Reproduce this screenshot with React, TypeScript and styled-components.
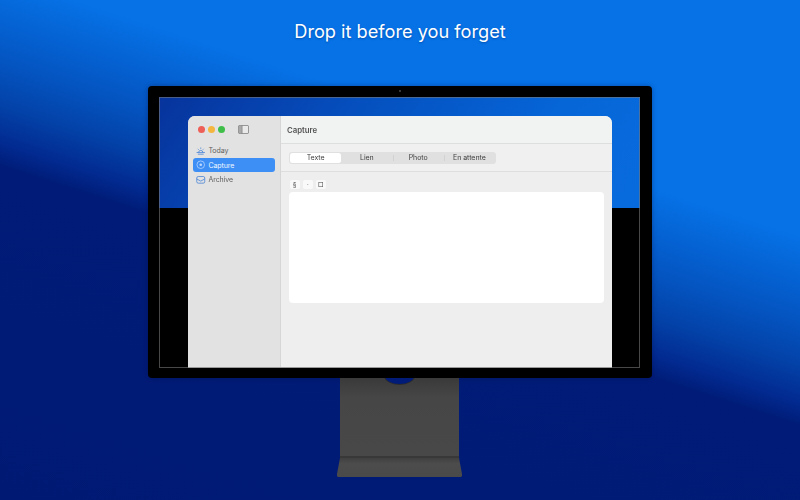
import React from 'react'
import styled, { createGlobalStyle } from 'styled-components'

const GlobalStyle = createGlobalStyle`
  html, body {
    margin: 0;
    padding: 0;
    width: 800px;
    height: 500px;
    overflow: hidden;
    background: #001a74;
  }
`

const App = () => {
  return (
    <Page>
      <GlobalStyle />
      <Title>Drop it before you forget</Title>
      <Monitor>
        <Camera />
        <Screen>
          <AppWindow>
            <Sidebar>
              <TrafficRow>
                <Light color="#ee5f58" />
                <Light color="#f4b63f" />
                <Light color="#3fbf4a" />
                <SidebarToggle viewBox="0 0 11 9">
                  <rect x="0.4" y="0.4" width="10.2" height="8.2" rx="1.4" fill="#e9e9e9" stroke="#777777" strokeWidth="0.8" />
                  <path d="M1 1H3.8V8H1Z" fill="#a9a9a9" />
                  <path d="M4 0.5V8.5" stroke="#777777" strokeWidth="0.8" />
                </SidebarToggle>
              </TrafficRow>
              <NavItem>
                <NavIcon viewBox="0 0 10 10" fill="none" stroke="#3f7fd6" strokeWidth="0.8">
                  <path d="M2.8 6.8a2.2 2.2 0 0 1 4.4 0" />
                  <path d="M5 1.6V3M1.9 3l.9.9M8.1 3l-.9.9M.6 6.8h8.8M2 8.6h6" />
                </NavIcon>
                Today
              </NavItem>
              <NavItem $active>
                <NavIcon viewBox="0 0 10 10" fill="none" stroke="#bcd8ff" strokeWidth="0.8">
                  <circle cx="5" cy="5" r="4" />
                  <circle cx="5" cy="5" r="1.4" fill="#bcd8ff" stroke="none" />
                </NavIcon>
                Capture
              </NavItem>
              <NavItem>
                <NavIcon viewBox="0 0 10 10" fill="none" stroke="#3f7fd6" strokeWidth="0.8">
                  <rect x="0.8" y="1.6" width="8.4" height="7" rx="1.6" />
                  <path d="M0.8 4.2L5 6.4L9.2 4.2" />
                </NavIcon>
                Archive
              </NavItem>
            </Sidebar>
            <Main>
              <Header>Capture</Header>
              <TabBar>
                <Tabs>
                  <Tab $active>Texte</Tab>
                  <Tab>Lien</Tab>
                  <Tab $divider>Photo</Tab>
                  <Tab $divider>En attente</Tab>
                </Tabs>
              </TabBar>
              <Editor>
                <Tools>
                  <ToolButton>§</ToolButton>
                  <ToolButton>·</ToolButton>
                  <ToolButton>□</ToolButton>
                </Tools>
                <TextArea />
              </Editor>
            </Main>
          </AppWindow>
        </Screen>
      </Monitor>
      <Stand>
        <Notch />
      </Stand>
      <StandBase />
    </Page>
  )
}

const Page = styled.div`
  width: 800px;
  height: 500px;
  overflow: hidden;
  display: flex;
  flex-direction: column;
  align-items: center;
  font-family: 'Inter', 'Liberation Sans', sans-serif;
  background: linear-gradient(198deg, #0672e6 0%, #0672e6 31%, #0455c2 42%, #0342a8 48%, #022a90 53%, #001c78 56%, #001a74 100%);
`
const Title = styled.h1`
  margin: 0;
  height: 86px;
  box-sizing: border-box;
  padding-top: 18px;
  font-size: 18.2px;
  line-height: 26px;
  font-weight: 400;
  color: #ffffff;
  text-shadow: 0 1px 2px rgba(0, 20, 80, 0.35);
`
const Monitor = styled.div`
  position: relative;
  flex: none;
  width: 504px;
  height: 292px;
  box-sizing: border-box;
  padding: 11px 11px 10px 11px;
  background: #000000;
  border-radius: 4px;
  box-shadow: 0 0 5px rgba(0, 10, 60, 0.35);
`
const Camera = styled.span`
  position: absolute;
  top: 4px;
  left: 251px;
  width: 2px;
  height: 2px;
  border-radius: 50%;
  background: #4a4a4a;
`
const Screen = styled.div`
  height: 100%;
  box-sizing: border-box;
  margin-right: 1px;
  padding: 19px 28px 0 29px;
  background:
    linear-gradient(#000, #000) bottom / 100% calc(100% - 111px) no-repeat,
    linear-gradient(125deg, #07339c 0%, #054fbe 30%, #0666d8 62%, #0a70e2 100%);
  box-shadow: inset 0 0 0 1px rgba(120, 120, 120, 0.6);
`
const AppWindow = styled.div`
  height: 100%;
  box-sizing: border-box;
  display: flex;
  background: #eeeeee;
  border-radius: 7px 7px 0 0;
  border-bottom: 1px solid #9a9a9a;
  overflow: hidden;
  filter: blur(0.25px);
`
const Sidebar = styled.aside`
  flex: none;
  width: 93px;
  box-sizing: border-box;
  padding: 0 5px;
  background: #e2e2e2;
  border-right: 1px solid #d6d6d6;
`
const TrafficRow = styled.div`
  height: 27px;
  display: flex;
  align-items: center;
  gap: 3px;
  padding-left: 4.5px;
`
const Light = styled.span<{ color: string }>`
  width: 7px;
  height: 7px;
  border-radius: 50%;
  background: ${(p) => p.color};
`
const SidebarToggle = styled.svg`
  width: 11px;
  height: 9px;
  margin-left: 10px;
`
const NavIcon = styled.svg`
  flex: none;
  width: 9.5px;
  height: 9.5px;
`
const NavItem = styled.div<{ $active?: boolean }>`
  height: 14.5px;
  box-sizing: border-box;
  padding: 0.5px 0 0 3.25px;
  display: flex;
  align-items: center;
  gap: 2.75px;
  border-radius: 3px;
  font-size: 7px;
  letter-spacing: -0.1px;
  color: ${(p) => (p.$active ? '#f2f7ff' : '#5f5f5f')};
  background: ${(p) => (p.$active ? '#3d8ff5' : 'transparent')};
`
const Main = styled.main`
  flex: 1;
  display: flex;
  flex-direction: column;
  min-width: 0;
`
const Header = styled.div`
  height: 27px;
  display: flex;
  align-items: center;
  padding-left: 6px;
  font-size: 7.8px;
  font-weight: 600;
  color: #555555;
  background: #f1f2f2;
  border-bottom: 1px solid #dedede;
`
const TabBar = styled.div`
  height: 27px;
  display: flex;
  align-items: center;
  padding-left: 8px;
  background: #f0f0f0;
  border-bottom: 1px solid #dedede;
`
const Tabs = styled.div`
  width: 207px;
  height: 12px;
  box-sizing: border-box;
  padding: 1px;
  display: grid;
  grid-template-columns: repeat(4, 1fr);
  background: #e0e0e0;
  border-radius: 3px;
`
const Tab = styled.div<{ $active?: boolean; $divider?: boolean }>`
  position: relative;
  display: flex;
  align-items: center;
  justify-content: center;
  font-size: 7px;
  letter-spacing: -0.05px;
  color: #404040;
  border-radius: 2.5px;
  background: ${(p) => (p.$active ? '#ffffff' : 'transparent')};
  &::before {
    content: '';
    display: ${(p) => (p.$divider ? 'block' : 'none')};
    position: absolute;
    left: 0;
    top: 2px;
    bottom: 2px;
    width: 1px;
    background: #d2d2d2;
  }
`
const Editor = styled.div`
  flex: 1;
  display: flex;
  flex-direction: column;
  padding: 8px 8px 0 8px;
`
const Tools = styled.div`
  display: flex;
  gap: 3.5px;
  height: 9px;
  margin-bottom: 2.5px;
  padding-left: 1px;
`
const ToolButton = styled.div`
  width: 9.5px;
  height: 9px;
  display: flex;
  align-items: center;
  justify-content: center;
  font-size: 6px;
  color: #444444;
  background: #f9f9f9;
  border-radius: 2px;
`
const TextArea = styled.div`
  height: 111.5px;
  background: #ffffff;
  border-radius: 4px;
`
const Stand = styled.div`
  flex: none;
  position: relative;
  width: 119px;
  height: 80px;
  margin-right: 1px;
  box-sizing: border-box;
  overflow: hidden;
  background: linear-gradient(#3a3a3a, #464646 25%, #484848);
  border-bottom: 2px solid #383838;
`
const Notch = styled.span`
  position: absolute;
  left: 45px;
  top: -10px;
  width: 29px;
  height: 16px;
  border-radius: 50%;
  background: #001c78;
  box-shadow: 0 0 0 1px #2c2c2c;
`
const StandBase = styled.div`
  flex: none;
  width: 125px;
  height: 19px;
  margin-right: 1px;
  background: linear-gradient(#404040, #4c4c4c 30%, #4a4a4a);
  clip-path: polygon(3px 0, 122px 0, 125px 16px, 125px 18px, 124px 19px, 1px 19px, 0 18px, 0 16px);
`

export default App
